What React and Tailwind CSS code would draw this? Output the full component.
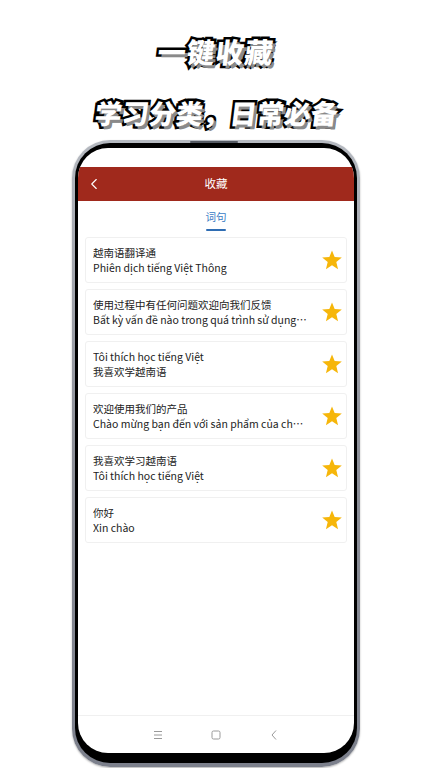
import React from 'react';
import { ChevronLeft } from 'lucide-react';

const items = [
  { zh: '越南语翻译通', vi: 'Phiên dịch tiếng Việt Thông' },
  { zh: '使用过程中有任何问题欢迎向我们反馈', vi: 'Bất kỳ vấn đề nào trong quá trình sử dụng sản phẩm xin vui lòng phản hồi' },
  { zh: 'Tôi thích học tiếng Việt', vi: '我喜欢学越南语' },
  { zh: '欢迎使用我们的产品', vi: 'Chào mừng bạn đến với sản phẩm của chúng tôi' },
  { zh: '我喜欢学习越南语', vi: 'Tôi thích học tiếng Việt' },
  { zh: '你好', vi: 'Xin chào' },
];

const font = "font-['Noto_Sans_CJK_SC','Noto_Sans',sans-serif]";
const headline =
  "font-['Noto_Sans_CJK_SC',sans-serif] font-black text-white skew-x-[-7deg] [-webkit-text-stroke:5px_#000] [paint-order:stroke_fill] [text-shadow:3px_3px_0_#8a8a8a]";

const Star = () => (
  <svg width="22" height="22" viewBox="0 0 24 24" className="shrink-0">
    <polygon
      points="12,1.5 14.9,8.8 22.7,9.3 16.7,14.3 18.6,22 12,17.8 5.4,22 7.3,14.3 1.3,9.3 9.1,8.8"
      fill="#f6b60a"
    />
  </svg>
);

const FavoriteCard = ({ zh, vi }) => (
  <div className="h-[46px] flex items-center bg-white border border-[#f0f0f0] rounded-[3px] pl-[7px] pr-[3px]">
    <div className="flex-1 min-w-0 pr-[12px] text-[10.5px] leading-[15px] text-[#222]">
      <div className="truncate">{zh}</div>
      <div className="truncate">{vi}</div>
    </div>
    <Star />
  </div>
);

export default function App() {
  return (
    <div className={`w-[432px] h-[768px] bg-white overflow-hidden flex flex-col items-center ${font}`}>
      <h1 className={`mt-[36px] h-[30px] leading-[30px] text-[28px] tracking-[1px] ${headline}`}>一键收藏</h1>
      <h2 className={`mt-[32px] h-[30px] leading-[30px] text-[27px] ${headline}`}>学习分类，日常必备</h2>

      {/* phone */}
      <div className="relative mt-[12px] w-[288px] h-[627px] shrink-0 rounded-[38px] p-[3px] pb-[4px] bg-gradient-to-b from-[#b5b9c0] via-[#8d9099] to-[#7c808c] shadow-[0_1px_2px_rgba(0,0,0,0.3)]">
        <div className="absolute top-[1px] left-[118px] w-[48px] h-[2px] rounded-full bg-[#555a63]" />
        <div className="w-full h-full rounded-[35px] bg-black px-[3px] pt-[5px] pb-[10px]">
          <div className="w-full h-full rounded-[30px] bg-white overflow-hidden flex flex-col">
            <div className="h-[19px] shrink-0" />

            {/* header */}
            <div className="h-[34px] shrink-0 bg-[#a0291c] flex items-center relative">
              <ChevronLeft className="ml-[7px] w-[18px] h-[18px] text-white" strokeWidth={1.5} />
              <div className="absolute inset-0 flex items-center justify-center text-white text-[11.5px]">收藏</div>
            </div>

            {/* tab */}
            <div className="h-[36px] shrink-0 flex flex-col items-center pt-[8px]">
              <div className="text-[10.5px] leading-[16px] text-[#3a7cc4]">词句</div>
              <div className="mt-[4px] w-[20px] h-[2px] rounded-full bg-[#2f6db3]" />
            </div>

            {/* list */}
            <div className="flex-1 flex flex-col gap-[6px] px-[7px]">
              {items.map((it, i) => (
                <FavoriteCard key={i} zh={it.zh} vi={it.vi} />
              ))}
            </div>

            {/* nav bar */}
            <div className="h-[38px] shrink-0 border-t border-[#f0f0f0] flex items-center justify-center gap-[44px] text-[#9a9a9a]">
              <svg width="14" height="14" viewBox="0 0 14 14">
                <path d="M3 3.5h8M3 7h8M3 10.5h8" stroke="currentColor" strokeWidth="1" />
              </svg>
              <svg width="14" height="14" viewBox="0 0 14 14">
                <rect x="3" y="3" width="8" height="8" rx="1.5" fill="none" stroke="currentColor" strokeWidth="1" />
              </svg>
              <svg width="14" height="14" viewBox="0 0 14 14">
                <path d="M9 2.5L5 7l4 4.5" fill="none" stroke="currentColor" strokeWidth="1" />
              </svg>
            </div>
          </div>
        </div>
      </div>
    </div>
  );
}
